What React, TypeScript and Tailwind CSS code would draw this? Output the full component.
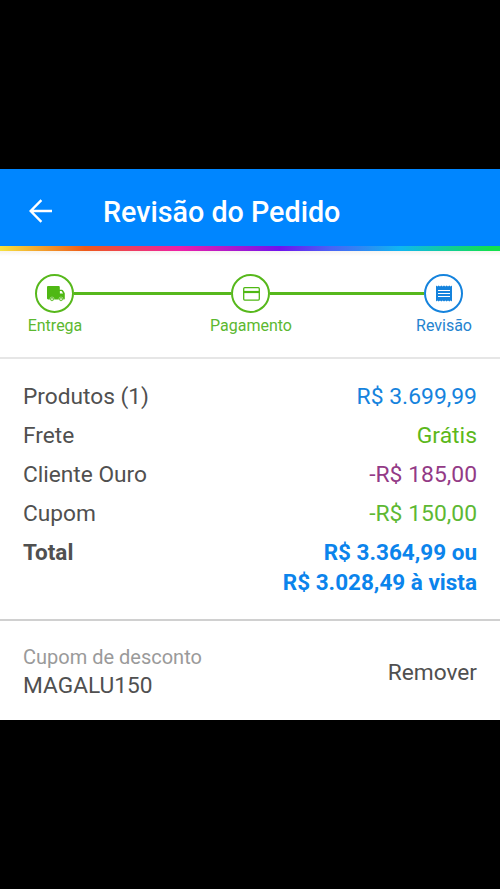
import type { ReactNode } from 'react';

type StepProps = {
  children: ReactNode;
  active?: boolean;
};

const rows = [
  { label: 'Produtos (1)', value: 'R$ 3.699,99', color: 'text-[#1583dd]' },
  { label: 'Frete', value: 'Grátis', color: 'text-[#5cb81a]' },
  { label: 'Cliente Ouro', value: '-R$ 185,00', color: 'text-[#933a86]' },
  { label: 'Cupom', value: '-R$ 150,00', color: 'text-[#5db833]' },
];

function BackArrow() {
  return (
    <svg width="24" height="24" viewBox="0 0 24 24" fill="none" stroke="currentColor" strokeWidth="2.4">
      <path d="M13.400 1.200 2.700 12l10.700 10.800M2.900 12H24" />
    </svg>
  );
}

function TruckIcon() {
  return (
    <svg className="ml-[2px]" width="18" height="16" viewBox="0 0 18 16" fill="currentColor">
      <path d="M1.200 0h10.300c.8 0 1.300.5 1.300 1.300v2.400h2c.6 0 1 .2 1.300.7l1.400 2.400c.2.300.3.600.3 1v4.600c0 .6-.4 1-1 1H1.200c-.7 0-1.200-.5-1.200-1.200V1.200C0 .5.500 0 1.200 0Z" />
      <path fill="#fff" d="M12.900 5h1.300c.3 0 .5.100.7.400l1.200 2.200h-3.200Z" />
      <circle cx="5" cy="13.100" r="2.100" stroke="#fff" strokeWidth=".4" />
      <circle cx="14" cy="13.100" r="2.100" stroke="#fff" strokeWidth=".4" />
      <circle cx="5" cy="13.100" r=".9" fill="#fff" />
      <circle cx="14" cy="13.100" r=".9" fill="#fff" />
    </svg>
  );
}

function CardIcon() {
  return (
    <svg className="mt-px ml-px" width="17" height="14" viewBox="0 0 17 14" fill="none" stroke="currentColor">
      <rect x=".7" y=".7" width="15.600" height="12.400" rx="1" strokeWidth="1.300" />
      <path d="M.7 5h15.600" strokeWidth="2.200" />
    </svg>
  );
}

function ReceiptIcon() {
  return (
    <svg width="16" height="17" viewBox="0 0 16 17">
      <path
        fill="currentColor"
        d="M0 .5 1.330 1.500 2.670.5 4 1.500 5.330.5 6.670 1.500 8 .5 9.330 1.500 10.670.5 12 1.500 13.330.5 14.670 1.500 16 .5v16l-1.330-1-1.340 1L12 15.500l-1.330 1-1.340-1L8 16.500l-1.330-1-1.340 1L4 15.500l-1.330 1-1.340-1L0 16.500Z"
      />
      <path stroke="#fff" strokeWidth="1.100" d="M2 5.500h12M2 8.500h12M2 11.500h12" />
    </svg>
  );
}

function Step({ children, active }: StepProps) {
  return (
    <div
      className={`flex size-[39px] shrink-0 items-center justify-center rounded-full border-2 ${
        active ? 'border-[#1583dd] text-[#1583dd]' : 'border-[#57b81c] text-[#4fb814]'
      }`}
    >
      {children}
    </div>
  );
}

function Stepper() {
  return (
    <section className="h-[108px] border-b-2 border-[#e6e6e6] bg-white bg-linear-to-b from-[#f6f3f0] to-white to-5% pt-[23px]">
      <div className="flex items-center pr-[37px] pl-[35px]">
        <Step><TruckIcon /></Step>
        <div className="h-[2.5px] w-[157px] bg-[#57b81c]" />
        <Step><CardIcon /></Step>
        <div className="h-[2.5px] flex-1 bg-[#57b81c]" />
        <Step active><ReceiptIcon /></Step>
      </div>
      <div className="mt-[2px] flex text-center text-[16px] leading-[22px] text-[#5cb830]">
        <span className="w-[110px]">Entrega</span>
        <span className="w-[282px]">Pagamento</span>
        <span className="w-[104px] text-[#2583cf]">Revisão</span>
      </div>
    </section>
  );
}

export default function App() {
  return (
    <div className="flex h-[889px] w-[500px] flex-col bg-black py-[169px] font-[Roboto,sans-serif] text-[#505050]">
      <header className="flex h-[77px] shrink-0 items-center bg-[#0086ff] pt-[7px] pl-7 text-white">
        <BackArrow />
        <h1 className="mt-[2px] ml-[51px] text-[28.700px] leading-8 font-medium">Revisão do Pedido</h1>
      </header>
      <div className="h-[5px] shrink-0 bg-[linear-gradient(90deg,#f6e23e_0%,#ee5a19_17%,#ee1fa8_36%,#7013ee_56%,#4a62f5_66%,#10b6f0_80%,#12e04d_98%)]" />

      <Stepper />

      <main className="h-[262px] border-b-2 border-[#d0d0d0] bg-white px-[23px] pt-[18px] text-[22.700px] leading-[39px]">
        {rows.map((row) => (
          <div key={row.label} className="flex justify-between">
            <span>{row.label}</span>
            <span className={`text-[22.900px] ${row.color}`}>{row.value}</span>
          </div>
        ))}
        <div className="flex justify-between text-[22.500px] font-bold">
          <span>Total</span>
          <div className="pt-[3.500px] text-right leading-[30px] text-[#0b84ec]">
            <p>R$ 3.364,99 ou</p>
            <p>R$ 3.028,49 à vista</p>
          </div>
        </div>
      </main>

      <footer className="flex h-[99px] shrink-0 items-center justify-between bg-white px-[23px] pt-1">
        <div className="-mt-[2px]">
          <p className="text-[20px] leading-7 text-[#9a9a9a]">Cupom de desconto</p>
          <p className="text-[22.700px] leading-[29px]">MAGALU150</p>
        </div>
        <button className="pt-[2px] text-[22.700px]">Remover</button>
      </footer>
    </div>
  );
}
